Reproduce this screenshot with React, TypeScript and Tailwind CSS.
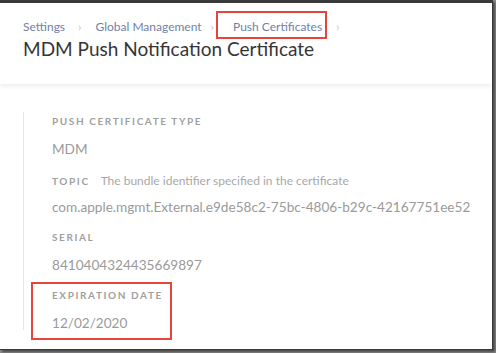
import React from 'react';

const fields = [
  { label: 'PUSH CERTIFICATE TYPE', value: 'MDM' },
  { label: 'TOPIC', hint: 'The bundle identifier specified in the certificate', value: 'com.apple.mgmt.External.e9de58c2-75bc-4806-b29c-42167751ee52' },
  { label: 'SERIAL', value: '8410404324435669897' },
  { label: 'EXPIRATION DATE', value: '12/02/2020', boxed: true },
];

const Chevron = ({ className }: { className: string }) => (
  <span className={`text-[12px] text-[#c4c4c4] ${className}`}>›</span>
);

const App: React.FC = () => {
  return (
    <div className="w-[496px] h-[353px] bg-[#8a8a8a] overflow-hidden" style={{ fontFamily: 'Lato, "Open Sans", sans-serif' }}>
      <div className="w-[493px] h-[350px] bg-white border-t-[3px] border-r border-b border-[#3a3a3a] shadow-[2px_2px_2px_rgba(0,0,0,0.45)] flex flex-col">
        <div className="h-[81px] shrink-0 px-[23px] pt-[8px] shadow-[0_2px_5px_rgba(0,0,0,0.08)] relative z-10">
          <div className="flex items-center h-[28px] text-[12px] text-[#7082a8]">
            <span className="pt-[4px]">Settings</span>
            <Chevron className="ml-[13px] mr-[14px] pt-[4px]" />
            <span className="pt-[4px]">Global Management</span>
            <Chevron className="ml-[9px] mr-[2px] pt-[4px]" />
            <span className="border-2 border-[#e5463c] pl-[15px] pr-[3px] h-[28px] leading-[24px] pt-[2px]">Push Certificates</span>
            <Chevron className="ml-[9px] pt-[4px]" />
          </div>
          <h1 className="text-[19px] leading-[24px] text-[#353535] -mt-[2px]">MDM Push Notification Certificate</h1>
        </div>
        <div className="flex-1 pt-[28px] pl-[23px]">
          <div className="border-l border-[#e6e6e6] pl-[28px] h-[218px]">
            {fields.map((f) => {
              const inner = (
                <>
                  <div className="flex items-baseline h-[27px] pt-[2px]">
                    <span className="text-[10px] font-bold tracking-[1.6px] text-[#9f9f9f]">{f.label}</span>
                    {f.hint && <span className="ml-[11px] text-[12px] text-[#a8a8a8]">{f.hint}</span>}
                  </div>
                  <div className="h-[31px] text-[13.6px] text-[#9a9a9a]">{f.value}</div>
                </>
              );
              return f.boxed ? (
                <div key={f.label} className="-ml-[21px] pl-[19px] w-[141px] border-2 border-[#e5463c] -mt-[4px] pt-[2px] h-[58px]">
                  {inner}
                </div>
              ) : (
                <div key={f.label}>{inner}</div>
              );
            })}
          </div>
        </div>
      </div>
    </div>
  );
};

export default App;
